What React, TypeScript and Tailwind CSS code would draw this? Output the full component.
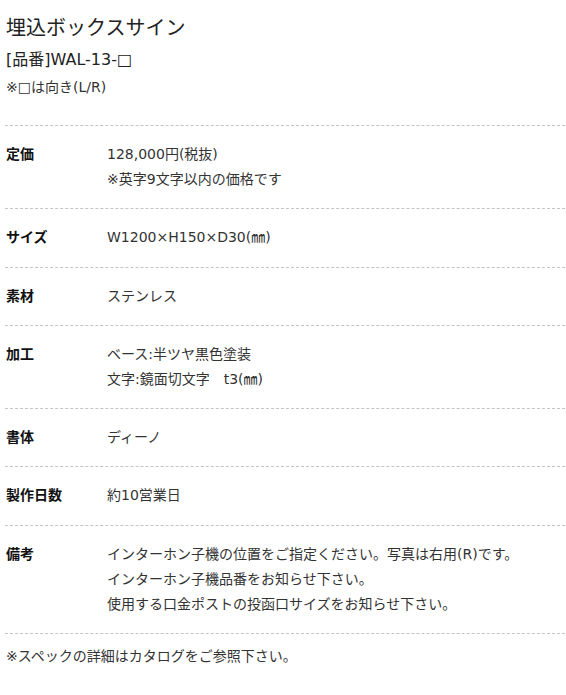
import React from 'react';

const specs: { label: string; lines: string[] }[] = [
  { label: '定価', lines: ['128,000円(税抜)', '※英字9文字以内の価格です'] },
  { label: 'サイズ', lines: ['W1200×H150×D30(㎜)'] },
  { label: '素材', lines: ['ステンレス'] },
  { label: '加工', lines: ['ベース:半ツヤ黒色塗装', '文字:鏡面切文字　t3(㎜)'] },
  { label: '書体', lines: ['ディーノ'] },
  { label: '製作日数', lines: ['約10営業日'] },
  {
    label: '備考',
    lines: [
      'インターホン子機の位置をご指定ください。写真は右用(R)です。',
      'インターホン子機品番をお知らせ下さい。',
      '使用する口金ポストの投函口サイズをお知らせ下さい。',
    ],
  },
];

const App: React.FC = () => {
  return (
    <div
      className="min-h-[695px] bg-white pl-[5px] pr-[1px] text-[#222]"
      style={{ fontFamily: '"DejaVu Sans", "Noto Sans CJK JP", sans-serif' }}
    >
      <div className="pl-[1px] pt-[13px]">
        <h1 className="text-[20px] leading-[30px] font-normal">埋込ボックスサイン</h1>
        <p className="mt-[4px] text-[16px] leading-[26px]">[品番]WAL-13-□</p>
        <p className="mt-[1px] text-[14px] leading-[26px] text-[#333]">※□は向き(L/R)</p>
      </div>

      {/* spec table */}
      <div className="mt-[25px] border-t border-dashed border-[#c4c4c4]">
        {specs.map((row) => (
          <div
            key={row.label}
            className="grid grid-cols-[101px_1fr] border-b border-dashed border-[#c4c4c4] py-4 pl-[1px] text-[14px] leading-[1.8]"
          >
            <div className="font-bold text-[#111]">{row.label}</div>
            <div className="text-[#333]">
              {row.lines.map((line) => (
                <p key={line}>{line}</p>
              ))}
            </div>
          </div>
        ))}
      </div>

      <p className="mt-[10px] pl-[1px] text-[14px] leading-[1.8] text-[#333]">
        ※スペックの詳細はカタログをご参照下さい。
      </p>
    </div>
  );
};

export default App;
